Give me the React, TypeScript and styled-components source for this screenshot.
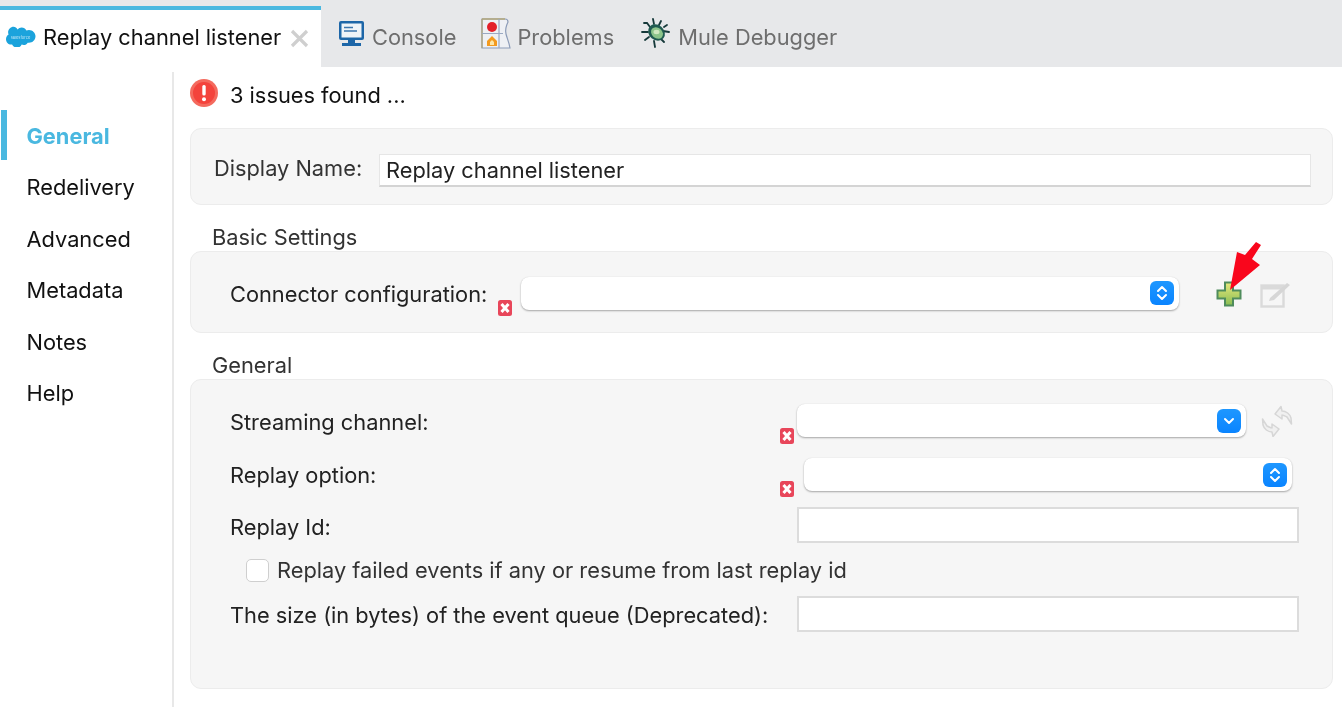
import * as React from 'react';
import styled, { createGlobalStyle } from 'styled-components';

const GlobalStyle = createGlobalStyle`
  html, body {
    margin: 0;
    padding: 0;
    background: #fff;
    overflow: hidden;
  }
  body {
    font-family: Inter, "Liberation Sans", sans-serif;
    color: #222;
    -webkit-font-smoothing: antialiased;
  }
`;

const SalesforceIcon = () => (
  <svg width="31" height="21" viewBox="0 0 31 21">
    <path
      fill="#1ba3dc"
      d="M12.5 3.6C13.6 2.3 15 1.6 16.6 1.6c2.1 0 3.9 1.2 4.8 2.9.8-.4 1.7-.6 2.6-.6 3.6 0 6.5 2.9 6.5 6.4 0 3.6-2.9 6.5-6.5 6.5-.4 0-.9 0-1.3-.1-.8 1.4-2.3 2.4-4 2.4-.7 0-1.4-.2-2-.5-.8 1.9-2.7 3.1-4.8 3-2.2 0-4-1.3-4.8-3.2-.3.1-.7.1-1.1.1C3.3 18.5 1 16.100 1 13.200c0-2 1-3.700 2.600-4.600-.3-.700-.5-1.500-.5-2.300C3.100 3.300 5.600.800 8.600.800c1.600 0 3 .9 3.900 2.800z"
    />
    <text x="15.500" y="12.500" fontSize="4" fill="#bfe6f6" textAnchor="middle" fontFamily="Inter, sans-serif">
      salesforce
    </text>
  </svg>
);

const ConsoleIcon = () => (
  <svg width="27" height="27" viewBox="0 0 27 27">
    <rect x="1" y="1" width="25" height="19" rx="2" fill="#1d66a8" />
    <rect x="3.500" y="3.500" width="20" height="14" fill="#eef3f8" />
    <path d="M6 7.500h9M6 11h13" stroke="#3b76ad" strokeWidth="1.400" />
    <rect x="10" y="20" width="7" height="3" fill="#1d66a8" />
    <rect x="4" y="23" width="19" height="3" fill="#1d66a8" />
  </svg>
);

const ProblemsIcon = () => (
  <svg width="30" height="31" viewBox="0 0 30 31">
    <path d="M1 1h23c2 0 3 1 3 3-2 4-3 8-2 12s3 8 4 14H1z" fill="#eef0f4" stroke="#8c9cb8" strokeWidth="1.200" />
    <path d="M1 1h23" stroke="#b3a678" strokeWidth="1.500" />
    <path d="M1 1v29" stroke="#b3a678" strokeWidth="1.200" />
    <path d="M18 1v29M1 15.500h21" stroke="#9aa9c2" strokeWidth="1.200" />
    <circle cx="11" cy="9" r="5" fill="#e3202a" />
    <path d="M11 18l5 5v5H6v-5z" fill="#f39a1f" />
    <path d="M11 22l2 2v3H9v-3z" fill="#fde6a8" />
  </svg>
);

const BugIcon = () => (
  <svg width="30" height="31" viewBox="0 0 30 31">
    <g stroke="#16393a" strokeWidth="1.800" fill="none" strokeLinecap="round">
      <path d="M9 9L6 5 3 5M13 6l-1-5M18 7l2-4M7 14H1M8 19l-4 3M13 23l1 6M20 21l3 3M22 13l6 1M23 9l3-2" />
    </g>
    <ellipse cx="15.500" cy="14.500" rx="9" ry="7.500" transform="rotate(40 15.500 14.500)" fill="#1f5a50" />
    <ellipse cx="16" cy="15" rx="6.500" ry="5.200" transform="rotate(40 16 15)" fill="#8cc48a" />
    <ellipse cx="15.500" cy="14" rx="3" ry="2.200" fill="#cfe8c0" />
  </svg>
);

const CloseIcon = () => (
  <svg width="21" height="21" viewBox="0 0 21 21">
    <path d="M3 3l15 15M18 3L3 18" stroke="#cfcfcf" strokeWidth="3.200" />
  </svg>
);

const AlertIcon = () => (
  <svg width="28" height="28" viewBox="0 0 28 28">
    <circle cx="14" cy="14" r="14" fill="#f46a5e" />
    <circle cx="14" cy="14" r="11" fill="#f4433c" />
    <rect x="12.300" y="6" width="3.400" height="10.500" rx="1.500" fill="#fff" />
    <circle cx="14" cy="20.300" r="2" fill="#fff" />
  </svg>
);

const ErrorIcon = () => (
  <svg width="14" height="16" viewBox="0 0 14 16">
    <rect width="14" height="16" rx="2.500" fill="#e8465a" />
    <path d="M3.500 4l7 8M10.500 4l-7 8" stroke="#fff" strokeWidth="3" />
  </svg>
);

const PlusIcon = () => (
  <svg width="26" height="26" viewBox="0 0 26 26">
    <defs>
      <linearGradient id="plus-fill" x1="0" y1="0" x2="0" y2="1">
        <stop offset="0" stopColor="#e3e67a" />
        <stop offset="1" stopColor="#8dbf55" />
      </linearGradient>
    </defs>
    <path d="M8 0.500h10v8h7.500v10H18v7H8v-7H.5v-10H8z" fill="#4f8c5c" />
    <path d="M10 2.500h6v8h7.500v6H16v7h-6v-7H2.500v-6H10z" fill="url(#plus-fill)" />
  </svg>
);

const EditIcon = () => (
  <svg width="32" height="28" viewBox="0 0 32 28">
    <rect x="1.500" y="5.500" width="22" height="21" fill="none" stroke="#dadada" strokeWidth="2.400" />
    <rect x="1.500" y="5.500" width="22" height="4" fill="#dadada" />
    <path d="M10 18l17-15 3 2-16 15-5 1z" fill="#d6d6d6" />
  </svg>
);

const SyncIcon = () => (
  <svg width="32" height="32" viewBox="0 0 32 32">
    <g fill="#f0f0f0" stroke="#d6d6d6" strokeWidth="1.500" strokeLinejoin="round">
      <path d="M14 9L20 1.500l1 4.500c4 0 8 3 9 7l.5 6-4.500-7c-2-1-4-2-5-2v4z" />
      <path d="M14 9L20 1.500l1 4.500c4 0 8 3 9 7l.5 6-4.500-7c-2-1-4-2-5-2v4z" transform="rotate(180 16 16.500)" />
    </g>
  </svg>
);

const StepperIcon = () => (
  <svg width="12" height="16" viewBox="0 0 12 16">
    <path d="M2 6l4-4 4 4M2 10l4 4 4-4" fill="none" stroke="#fff" strokeWidth="2" strokeLinecap="round" strokeLinejoin="round" />
  </svg>
);

const ChevronIcon = () => (
  <svg width="12" height="8" viewBox="0 0 12 8">
    <path d="M2 2l4 4 4-4" fill="none" stroke="#fff" strokeWidth="2" strokeLinecap="round" strokeLinejoin="round" />
  </svg>
);

const ArrowIcon = () => (
  <svg width="36" height="52" viewBox="0 0 36 52">
    <path d="M28 2l5 3-9 14 8 6L2 50l7-38 8 3z" fill="#f9061c" />
  </svg>
);

const Page = styled.div`
  width: 1342px;
  height: 723px;
  display: flex;
  flex-direction: column;
  background: #fff;
  font-size: 21.800px;
  overflow: hidden;
  filter: blur(0.35px);
`;

const TabBar = styled.div`
  height: 67px;
  flex: none;
  display: flex;
  align-items: stretch;
  background: #e7e8ea;
`;

const ActiveTab = styled.div`
  width: 321px;
  margin-top: 6px;
  box-sizing: border-box;
  border-top: 4px solid #4ab8e0;
  background: #fff;
  display: flex;
  align-items: center;
  padding: 0 0 4px 5px;
  color: #111;
`;

const TabLabel = styled.span`
  margin-left: 7px;
  white-space: nowrap;
`;

const TabClose = styled.span`
  display: flex;
  margin: 4px 0 0 8px;
`;

const Tab = styled.div<{ $gap: number; $left: number }>`
  display: flex;
  align-items: center;
  gap: ${({ $gap }) => $gap}px;
  margin-left: ${({ $left }) => $left}px;
  padding-top: 6px;
  color: #6e6e6e;
  white-space: nowrap;

  svg {
    margin-top: -6px;
  }
`;

const Body = styled.div`
  flex: 1;
  display: flex;
  min-height: 0;
`;

const Sidebar = styled.nav`
  width: 174px;
  height: 635px;
  margin-top: 5px;
  box-sizing: border-box;
  flex: none;
  border-right: 2px solid #e8e8e8;
  padding-top: 38.300px;
  display: flex;
  flex-direction: column;
`;

const NavItem = styled.div<{ $active?: boolean }>`
  height: 51.400px;
  box-sizing: border-box;
  padding-left: 26.500px;
  display: flex;
  align-items: center;
  color: ${({ $active }) => ($active ? '#4ab8e0' : '#111')};
  font-weight: ${({ $active }) => ($active ? 700 : 400)};
  position: relative;

  &::before {
    content: '';
    display: ${({ $active }) => ($active ? 'block' : 'none')};
    position: absolute;
    left: 1px;
    top: 0;
    width: 6px;
    height: 50px;
    background: #4ab8e0;
  }
`;

const Main = styled.main`
  flex: 1;
  padding: 12px 9px 0 16px;
  min-width: 0;
`;

const Status = styled.div`
  display: flex;
  align-items: center;
  gap: 12px;
  height: 28px;
  color: #111;
`;

const StatusText = styled.span`
  margin-top: 4px;
`;

const Panel = styled.section<{ $height: number }>`
  height: ${({ $height }) => $height}px;
  box-sizing: border-box;
  background: #f6f6f6;
  border: 1px solid #ececec;
  border-radius: 11px;
`;

const NamePanel = styled(Panel)`
  margin-top: 21px;
  display: flex;
  align-items: center;
  padding: 0 21px 0 23px;
`;

const SectionTitle = styled.h2`
  margin: 0;
  height: 46px;
  box-sizing: border-box;
  padding: 19px 0 0 22px;
  font-size: 21.800px;
  font-weight: 400;
  line-height: 26px;
  color: #333;
`;

const NameLabel = styled.label`
  color: #333;
  width: 165px;
  flex: none;
  margin-top: 3px;
  white-space: nowrap;
`;

const NameInput = styled.div`
  flex: 1;
  height: 33px;
  margin-top: 7px;
  box-sizing: border-box;
  background: #fff;
  border: 1px solid #e6e6e6;
  border-bottom: 2px solid #d4d4d4;
  padding-left: 6px;
  display: flex;
  align-items: center;
  color: #222;
`;

const ConfigRow = styled.div`
  height: 100%;
  display: flex;
  align-items: center;
  padding-left: 39px;
  position: relative;
`;

const FormStack = styled.div`
  padding: 24px 0 0 39px;
  display: flex;
  flex-direction: column;
`;

const FormRow = styled.div<{ $top?: number }>`
  display: flex;
  align-items: center;
  margin-top: ${({ $top }) => $top ?? 0}px;
`;

const RowLabel = styled.label<{ $width: number; $nudge?: number }>`
  width: ${({ $width }) => $width}px;
  margin-top: ${({ $nudge }) => $nudge ?? 0}px;
  flex: none;
  color: #222;
  white-space: nowrap;
`;

const SelectBox = styled.div<{ $width: number; $nudge?: number }>`
  position: relative;
  width: ${({ $width }) => $width}px;
  height: 33px;
  margin-top: ${({ $nudge }) => $nudge ?? 0}px;
  flex: none;
  box-sizing: border-box;
  background: #fff;
  border-radius: 8px;
  box-shadow: 0 1px 2px rgba(0, 0, 0, 0.32), 0 0 1px rgba(0, 0, 0, 0.1);
  display: flex;
  align-items: center;
  justify-content: flex-end;
  padding-right: 5px;
`;

const SelectButton = styled.span`
  width: 24px;
  height: 24px;
  border-radius: 6px;
  background: linear-gradient(#1e97ff, #0a84ff);
  display: flex;
  align-items: center;
  justify-content: center;
`;

const ErrorBadge = styled.span<{ $left: number; $top: number }>`
  position: absolute;
  display: flex;
  left: ${({ $left }) => $left}px;
  top: ${({ $top }) => $top}px;
`;

const IconSlot = styled.span<{ $left: number; $nudge?: number }>`
  display: flex;
  margin-left: ${({ $left }) => $left}px;
  margin-top: ${({ $nudge }) => $nudge ?? 0}px;
`;

const TextInput = styled.div`
  width: 502px;
  height: 36px;
  flex: none;
  box-sizing: border-box;
  background: #fff;
  border: 2px solid #dcdcdc;
`;

const CheckRow = styled.label`
  display: flex;
  align-items: center;
  margin: 15px 0 0 16px;
  height: 24px;
  color: #333;
  white-space: nowrap;
`;

const CheckBox = styled.span`
  width: 23px;
  height: 23px;
  box-sizing: border-box;
  background: #fff;
  border: 1px solid #cfcfcf;
  border-radius: 5px;
  margin-right: 8px;
`;

const RedArrow = styled.span`
  position: absolute;
  left: 1037px;
  top: -12px;
  display: flex;
`;

const navItems = ['General', 'Redelivery', 'Advanced', 'Metadata', 'Notes', 'Help'];

export default function App() {
  return (
    <Page>
      <GlobalStyle />
      <TabBar>
        <ActiveTab>
          <SalesforceIcon />
          <TabLabel>Replay channel listener</TabLabel>
          <TabClose>
            <CloseIcon />
          </TabClose>
        </ActiveTab>
        <Tab $gap={7} $left={17}>
          <ConsoleIcon />
          Console
        </Tab>
        <Tab $gap={6} $left={25}>
          <ProblemsIcon />
          Problems
        </Tab>
        <Tab $gap={7} $left={27}>
          <BugIcon />
          Mule Debugger
        </Tab>
      </TabBar>
      <Body>
        <Sidebar>
          {navItems.map((item, i) => (
            <NavItem key={item} $active={i === 0}>
              {item}
            </NavItem>
          ))}
        </Sidebar>
        <Main>
          <Status>
            <AlertIcon />
            <StatusText>3 issues found ...</StatusText>
          </Status>
          <NamePanel $height={77}>
            <NameLabel>Display Name:</NameLabel>
            <NameInput>Replay channel listener</NameInput>
          </NamePanel>
          <SectionTitle>Basic Settings</SectionTitle>
          <Panel $height={82}>
            <ConfigRow>
              <RowLabel $width={291} $nudge={4}>
                Connector configuration:
              </RowLabel>
              <SelectBox $width={658} $nudge={2}>
                <ErrorBadge $left={-23} $top={23}>
                  <ErrorIcon />
                </ErrorBadge>
                <SelectButton>
                  <StepperIcon />
                </SelectButton>
              </SelectBox>
              <IconSlot $left={37} $nudge={4}>
                <PlusIcon />
              </IconSlot>
              <IconSlot $left={18} $nudge={4}>
                <EditIcon />
              </IconSlot>
              <RedArrow>
                <ArrowIcon />
              </RedArrow>
            </ConfigRow>
          </Panel>
          <SectionTitle>General</SectionTitle>
          <Panel $height={310}>
            <FormStack>
              <FormRow>
                <RowLabel $width={567} $nudge={2}>
                  Streaming channel:
                </RowLabel>
                <SelectBox $width={449}>
                  <ErrorBadge $left={-17} $top={24}>
                    <ErrorIcon />
                  </ErrorBadge>
                  <SelectButton>
                    <ChevronIcon />
                  </SelectButton>
                </SelectBox>
                <IconSlot $left={15}>
                  <SyncIcon />
                </IconSlot>
              </FormRow>
              <FormRow $top={21}>
                <RowLabel $width={574}>Replay option:</RowLabel>
                <SelectBox $width={488}>
                  <ErrorBadge $left={-24} $top={23}>
                    <ErrorIcon />
                  </ErrorBadge>
                  <SelectButton>
                    <StepperIcon />
                  </SelectButton>
                </SelectBox>
              </FormRow>
              <FormRow $top={16}>
                <RowLabel $width={567} $nudge={4}>
                  Replay Id:
                </RowLabel>
                <TextInput />
              </FormRow>
              <CheckRow>
                <CheckBox />
                Replay failed events if any or resume from last replay id
              </CheckRow>
              <FormRow $top={14}>
                <RowLabel $width={567} $nudge={2}>
                  The size (in bytes) of the event queue (Deprecated):
                </RowLabel>
                <TextInput />
              </FormRow>
            </FormStack>
          </Panel>
        </Main>
      </Body>
    </Page>
  );
}
